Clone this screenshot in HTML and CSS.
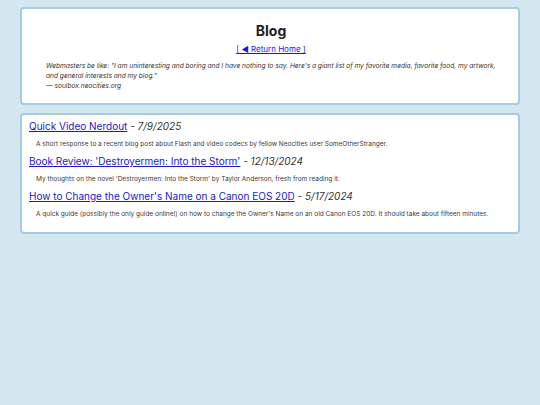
FILE: index.html
```html
<!DOCTYPE html>
<html lang="en">
<head>
<meta charset="utf-8">
<title>Blog</title>
<link rel="stylesheet" href="styles.css">
</head>
<body>
<main class="page">
  <section class="panel header">
    <h1 class="title">Blog</h1>
    <p class="back"><a href="#">[ ◄ Return Home ]</a></p>
    <blockquote class="quote">
      <p>Webmasters be like: "I am uninteresting and boring and I have nothing to say. Here's a giant list of my favorite media, favorite food, my artwork, and general interests and my blog."</p>
      <p>— soulbox.neocities.org</p>
    </blockquote>
  </section>
  <section class="panel posts">
    <article class="post">
      <h2 class="post-title"><a href="#">Quick Video Nerdout</a> <span class="date">- 7/9/2025</span></h2>
      <p class="post-desc">A short response to a recent blog post about Flash and video codecs by fellow Neocities user SomeOtherStranger.</p>
    </article>
    <article class="post">
      <h2 class="post-title"><a href="#">Book Review: 'Destroyermen: Into the Storm'</a> <span class="date">- 12/13/2024</span></h2>
      <p class="post-desc">My thoughts on the novel 'Destroyermen: Into the Storm' by Taylor Anderson, fresh from reading it.</p>
    </article>
    <article class="post">
      <h2 class="post-title"><a href="#">How to Change the Owner's Name on a Canon EOS 20D</a> <span class="date">- 5/17/2024</span></h2>
      <p class="post-desc">A quick guide (possibly the only guide online!) on how to change the Owner's Name on an old Canon EOS 20D. It should take about fifteen minutes.</p>
    </article>
  </section>
</main>
</body>
</html>
```
FILE: styles.css
```css
html, body {
  margin: 0;
  padding: 0;
  background: #d4e6f0;
}
body {
  font-family: Inter, "Noto Sans", sans-serif;
  color: #222;
}
.page {
  width: 500px;
  margin: 0 auto;
  padding-top: 7px;
  display: flex;
  flex-direction: column;
  gap: 8px;
}
.panel {
  background: #fff;
  border: 2px solid #a6cbe2;
  border-radius: 4px;
  box-sizing: border-box;
}
.header {
  height: 98px;
  padding: 12px 22px 0 24px;
}
.title {
  margin: 0;
  text-align: center;
  font-size: 14px;
  font-weight: 700;
  line-height: 20px;
  color: #222;
}
.back {
  margin: 2px 0 0 0;
  text-align: center;
  font-size: 8px;
  line-height: 12px;
}
.back a, .post-title a {
  color: #1a1acc;
}
.quote {
  margin: 6px 0 0 0;
  font-style: italic;
  font-size: 6.6px;
  line-height: 10px;
  color: #333;
}
.quote p {
  margin: 0;
}
.posts {
  padding: 2px 7px 12px 7px;
  height: 121px;
}
.post-title {
  margin: 0;
  font-size: 10px;
  font-weight: 400;
  line-height: 18px;
}
.date {
  font-style: italic;
  color: #333;
}
.post-desc {
  margin: 4px 0 3px 7px;
  font-size: 6.5px;
  line-height: 10px;
  color: #3a3a3a;
}
```
